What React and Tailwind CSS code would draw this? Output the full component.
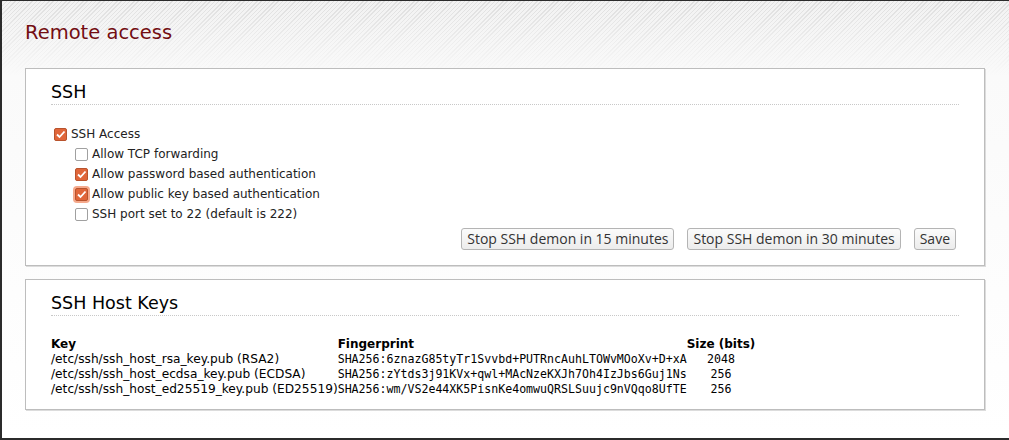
import React from "react";

const keys = [
  {
    file: "/etc/ssh/ssh_host_rsa_key.pub (RSA2)",
    fp: "SHA256:6znazG85tyTr1Svvbd+PUTRncAuhLTOWvMOoXv+D+xA",
    size: 2048,
  },
  {
    file: "/etc/ssh/ssh_host_ecdsa_key.pub (ECDSA)",
    fp: "SHA256:zYtds3j91KVx+qwl+MAcNzeKXJh7Oh4IzJbs6Guj1Ns",
    size: 256,
  },
  {
    file: "/etc/ssh/ssh_host_ed25519_key.pub (ED25519)",
    fp: "SHA256:wm/VS2e44XK5PisnKe4omwuQRSLSuujc9nVQqo8UfTE",
    size: 256,
  },
];

const Box = ({ checked, focus }) => (
  <span
    className={`inline-flex h-[13px] w-[13px] shrink-0 items-center justify-center rounded-[2px] border ${
      checked ? "border-[#b8532d] bg-[#e0663a]" : "border-[#a0a0a0] bg-white"
    } ${focus ? "ring-2 ring-[#f5a98c]" : ""}`}
  >
    {checked && (
      <svg width="11" height="11" viewBox="0 0 11 11">
        <path d="M2 5.5 L4.5 8 L9.5 2.5" fill="none" stroke="#fff" strokeWidth="1.8" />
      </svg>
    )}
  </span>
);

const Option = ({ label, checked, focus, sub }) => (
  <label className={`flex h-5 items-center gap-[4px] ${sub ? "pl-[24px]" : "pl-[3px]"}`}>
    <Box checked={checked} focus={focus} />
    <span>{label}</span>
  </label>
);

const Button = ({ children }) => (
  <button className="h-[22px] rounded-[3px] border border-[#b4b4b4] bg-[linear-gradient(#fbfbfb,#ececec)] px-[5px] font-['Open_Sans',sans-serif] text-[14px] leading-none text-[#333]">
    {children}
  </button>
);

const Section = ({ title, children }) => (
  <div className="border border-[#bdbdbd] bg-white px-[25px] shadow-[1px_1px_0_#dcdcdc]">
    <h2 className="pt-[14px] pb-[2px] text-[17.5px] leading-[19px] text-black">{title}</h2>
    <div className="border-b border-dotted border-[#c8c8c8]" />
    {children}
  </div>
);

export default function App() {
  return (
    <div className="h-[440px] w-full border-t border-b-2 border-l-2 border-[#2b2b2b] bg-[linear-gradient(to_bottom,rgba(250,250,250,0)_0px,#fafafa_75px,#fff_100%),repeating-linear-gradient(-45deg,#dedede_0px,#dedede_1px,#f2f2f2_1px,#f2f2f2_3px)] pl-[23px] pr-[24px] font-['DejaVu_Sans',sans-serif] text-[12px] text-[#222]">
      <h1 className="pt-[15px] pb-[19px] text-[19.5px] leading-[33px] text-[#730d12]">Remote access</h1>

      <Section title="SSH">
        <div className="pt-[19px]">
          <Option label="SSH Access" checked />
          <Option label="Allow TCP forwarding" sub />
          <Option label="Allow password based authentication" checked sub />
          <Option label="Allow public key based authentication" checked focus sub />
          <Option label="SSH port set to 22 (default is 222)" sub />
        </div>
        <div className="flex justify-end gap-[13px] pt-[4px] pr-[3px] pb-[15px]">
          <Button>Stop SSH demon in 15 minutes</Button>
          <Button>Stop SSH demon in 30 minutes</Button>
          <Button>Save</Button>
        </div>
      </Section>

      <div className="h-[13px]" />

      <Section title="SSH Host Keys">
        <table className="mt-[21px] mb-[12px] border-collapse text-left leading-[15px] text-black">
          <thead>
            <tr>
              <th className="p-0 font-bold">Key</th>
              <th className="p-0 font-bold">Fingerprint</th>
              <th className="p-0 font-bold">Size (bits)</th>
            </tr>
          </thead>
          <tbody>
            {keys.map((k) => (
              <tr key={k.file}>
                <td className="p-0 whitespace-nowrap text-[12.2px]">{k.file}</td>
                <td className="p-0 whitespace-nowrap font-['DejaVu_Sans_Mono',monospace] text-[11.6px]">{k.fp}</td>
                <td className="p-0 text-center font-['DejaVu_Sans_Mono',monospace] text-[11.6px]">{k.size}</td>
              </tr>
            ))}
          </tbody>
        </table>
      </Section>
    </div>
  );
}
